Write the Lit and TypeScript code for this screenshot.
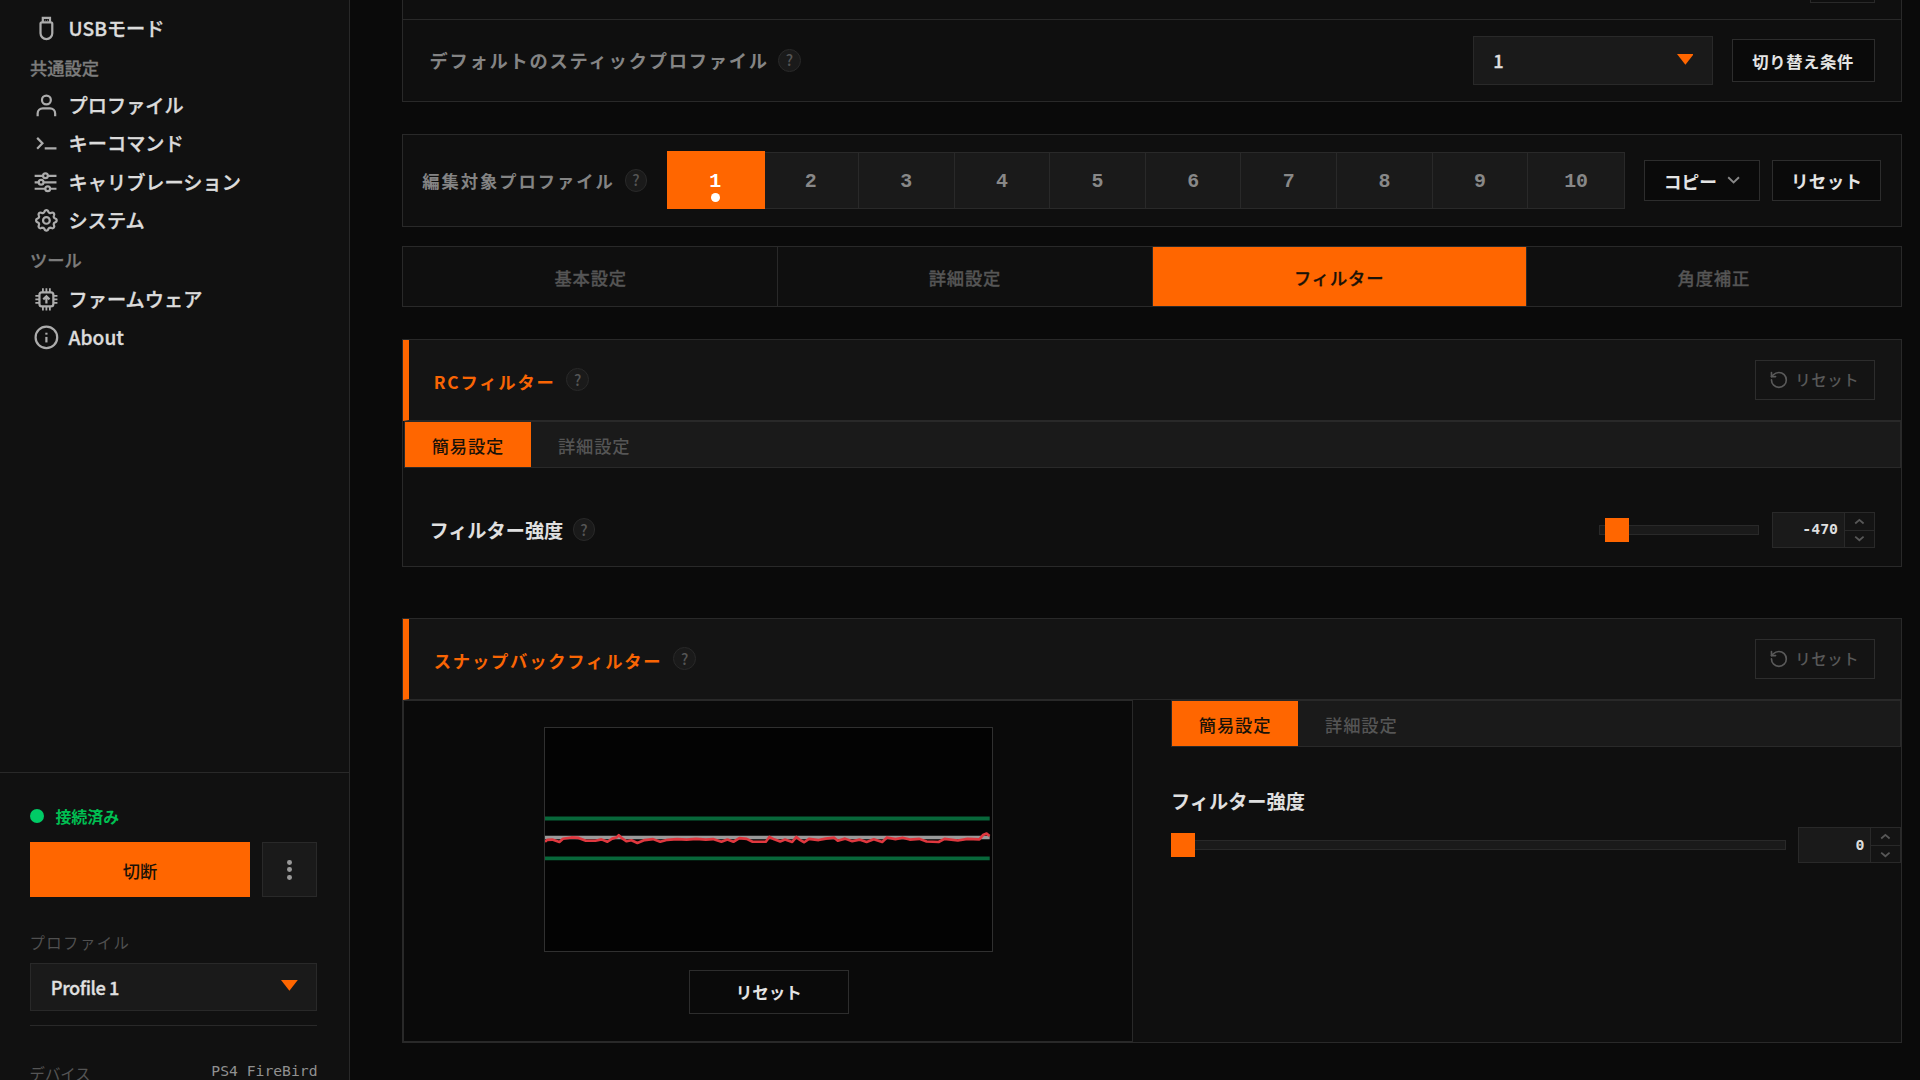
import { LitElement, html, svg, css } from "lit";
import { customElement, property } from "lit/decorators.js";
import { classMap } from "lit/directives/class-map.js";

const shared = css`
  * {
    box-sizing: border-box;
  }
  .btn {
    display: flex;
    align-items: center;
    justify-content: center;
    border: 1px solid #2d2d2d;
    background: #0a0a0a;
    color: #e4e4e4;
    font-weight: 700;
    white-space: nowrap;
  }
`;

// Eight-lobed outline of the settings cog.
const cogPath = (() => {
  const pts: string[] = [];
  for (let i = 0; i < 96; i++) {
    const a = (i / 96) * Math.PI * 2;
    const c = Math.cos(a * 8);
    const r = 7.65 + 0.9 * Math.sign(c) * Math.pow(Math.abs(c), 0.6);
    pts.push(`${(12 + r * Math.sin(a)).toFixed(2)} ${(12 - r * Math.cos(a)).toFixed(2)}`);
  }
  return `M${pts.join("L")}Z`;
})();

const icons: Record<string, unknown> = {
  usb: svg`<path d="M9 7V3.2h6V7"/><path d="M7.1 8.2Q7.1 7 8.3 7h7.4q1.2 0 1.2 1.2V16a4.9 4.9 0 0 1-9.8 0z"/><path d="M10.7 5.2h.6M12.7 5.2h.6" stroke-width="1"/>`,
  user: svg`<circle cx="12" cy="7.5" r="3.7"/><path d="M4.7 21v-2.2a4.3 4.3 0 0 1 4.3-4.3h6a4.3 4.3 0 0 1 4.3 4.3V21"/>`,
  terminal: svg`<path d="M4.3 7.4L8.7 11.9 4.3 16.4M10.6 16.2h9.8"/>`,
  sliders: svg`<path d="M2.2 6.5h6.9M13.3 6.5h7.1M2.2 11.9h3.2M9.7 11.9h10.7M2.2 17.3h8.8M15.2 17.3h5.2"/><circle cx="11.2" cy="6.5" r="2"/><circle cx="7.6" cy="11.9" r="2"/><circle cx="13.1" cy="17.3" r="2"/>`,
  cog: svg`<path d=${cogPath}/><circle cx="12" cy="12" r="2.8"/>`,
  chip: svg`<rect x="6.2" y="6.2" width="11.6" height="11.6" rx="2"/><path d="M9.1 6V2.8M12 6V2.8M14.9 6V2.8M9.1 21.2V18M12 21.2V18M14.9 21.2V18M6 9.1H2.8M6 12H2.8M6 14.9H2.8M21.2 9.1H18M21.2 12H18M21.2 14.9H18" stroke-width="1.5"/><path d="M12 15.4V9.6M9.4 12L12 9.4l2.6 2.6"/>`,
  info: svg`<circle cx="12" cy="12" r="9"/><path d="M12 11.6v4.6" /><path d="M12 8.1v1.6"/>`,
};

@customElement("help-dot")
class HelpDot extends LitElement {
  static styles = css`
    :host {
      display: flex;
      flex: none;
      align-items: center;
      justify-content: center;
      box-sizing: border-box;
      width: 19px;
      height: 19px;
      border: 1px solid #292929;
      border-radius: 50%;
      background: #1a1a1a;
      color: #555;
      font-size: 12.5px;
      font-weight: 500;
      line-height: 17px;
    }
  `;
  render() {
    return html`?`;
  }
}

@customElement("reset-button")
class ResetButton extends LitElement {
  static styles = [
    shared,
    css`
      .btn {
        width: 100px;
        height: 33.3px;
        gap: 5.5px;
        background: transparent;
        color: #585858;
        font-size: 12.8px;
        font-weight: 500;
        letter-spacing: 0.5px;
        padding-right: 1px;
      }
      .icon {
        width: 16.5px;
        height: 16.5px;
        fill: none;
        stroke: #5a5a5a;
        stroke-width: 2;
        stroke-linecap: round;
        stroke-linejoin: round;
      }
    `,
  ];
  render() {
    return html`<div class="btn">
      <svg class="icon" viewBox="0 0 24 24">
        <path d="M3 12a9 9 0 1 0 9-9 9.75 9.75 0 0 0-6.74 2.74L3 8" />
        <path d="M3 3v5h5" />
      </svg>
      <span>リセット</span>
    </div>`;
  }
}

@customElement("mode-tabs")
class ModeTabs extends LitElement {
  static styles = css`
    .strip {
      display: flex;
      box-sizing: border-box;
      height: 39.6px;
      background: #1a1a1a;
      border: 1px solid #292929;
    }
    .tab {
      width: 105.2px;
      display: flex;
      align-items: center;
      justify-content: center;
      color: #555;
      font-size: 14.4px;
      font-weight: 500;
      letter-spacing: 0.72px;
      padding-top: 2px;
      box-sizing: border-box;
    }
    .on {
      background: #ff6600;
      color: #1a1208;
    }
  `;
  render() {
    return html`<div class="strip">
      <div class="tab on">簡易設定</div>
      <div class="tab">詳細設定</div>
    </div>`;
  }
}

@customElement("range-input")
class RangeInput extends LitElement {
  @property({ type: Number }) value = 0;
  @property({ type: Number }) position = 0;
  static styles = css`
    :host {
      display: flex;
      align-items: center;
      gap: 10.5px;
    }
    .track {
      flex: 1;
      height: 8.3px;
      box-sizing: border-box;
      border: 1px solid #292929;
      background: #1a1a1a;
      display: flex;
      align-items: center;
    }
    .thumb {
      flex: none;
      width: 19.8px;
      height: 19.8px;
      background: #ff6600;
    }
    .number {
      display: grid;
      grid-template-columns: 1fr 24px;
      box-sizing: border-box;
      width: 85.6px;
      height: 30px;
      border: 1px solid #292929;
      background: #1a1a1a;
    }
    .value {
      display: flex;
      align-items: center;
      justify-content: flex-end;
      padding-right: 4.8px;
      border-right: 1px solid #292929;
      color: #dedede;
      font-family: "DejaVu Sans Mono", monospace;
      font-size: 12.4px;
      font-weight: 700;
    }
    .spin {
      display: grid;
      grid-template-rows: 1fr 1fr;
      background: #141414;
    }
    .step {
      display: flex;
      align-items: center;
      justify-content: center;
    }
    .step + .step {
      border-top: 1px solid #292929;
    }
    .icon {
      width: 9px;
      height: 6px;
      fill: none;
      stroke: #585858;
      stroke-width: 1.5;
    }
  `;
  render() {
    return html`
      <div class="track">
        <div class="thumb" style="margin-left:${this.position}px"></div>
      </div>
      <div class="number">
        <div class="value">${this.value}</div>
        <div class="spin">
          <div class="step"><svg class="icon" viewBox="0 0 9 6"><path d="M1 4.6L4.5 1.6 8 4.6" /></svg></div>
          <div class="step"><svg class="icon" viewBox="0 0 9 6"><path d="M1 1.4L4.5 4.4 8 1.4" /></svg></div>
        </div>
      </div>
    `;
  }
}

@customElement("side-bar")
class SideBar extends LitElement {
  static styles = [
    shared,
    css`
      :host {
        display: flex;
        flex: none;
        flex-direction: column;
        box-sizing: border-box;
        width: 292px;
        height: 900px;
        background: #111;
        border-right: 1px solid #292929;
      }
      .nav {
        flex: none;
        height: 643.5px;
        padding: 8px 0 0 26.3px;
        overflow: hidden;
      }
      .item {
        display: flex;
        align-items: center;
        gap: 6.9px;
        height: 32px;
        color: #dcdcdc;
        font-size: 16px;
        font-weight: 500;
        -webkit-text-stroke: 0.3px #dcdcdc;
      }
      .item .icon {
        width: 24px;
        height: 24px;
        fill: none;
        stroke: #acacac;
        stroke-width: 1.85;
      }
      .section {
        height: 31.9px;
        margin-left: -1.3px;
        color: #7c7c7c;
        font-size: 14.4px;
        font-weight: 500;
        line-height: 33px;
        -webkit-text-stroke: 0.25px #7c7c7c;
      }
      .tools {
        height: 33.6px;
      }
      .foot {
        flex: 1;
        border-top: 1px solid #292929;
        padding: 25px 26.6px 0 24.6px;
      }
      .status {
        display: flex;
        align-items: center;
        gap: 9.6px;
        height: 21px;
        color: #00bf52;
        font-size: 13.3px;
        font-weight: 700;
      }
      .led {
        width: 12px;
        height: 12px;
        border-radius: 50%;
        background: #00cc66;
      }
      .actions {
        display: flex;
        gap: 10px;
        margin-top: 11.6px;
        height: 46px;
      }
      .disconnect {
        flex: 1;
        display: flex;
        align-items: center;
        justify-content: center;
        background: #ff6600;
        color: #1a1208;
        font-size: 14.4px;
        font-weight: 500;
        padding-top: 2px;
      }
      .kebab {
        width: 46px;
        display: flex;
        flex-direction: column;
        align-items: center;
        justify-content: center;
        gap: 2.2px;
        background: #1a1a1a;
        border: 1px solid #292929;
      }
      .dot {
        width: 4px;
        height: 4px;
        border-radius: 50%;
        background: #999;
      }
      .label {
        margin-top: 28px;
        height: 20px;
        line-height: 19px;
        color: #505050;
        font-size: 12.8px;
        letter-spacing: 1.2px;
      }
      .select {
        margin-top: 6.3px;
        display: flex;
        align-items: center;
        justify-content: space-between;
        height: 40.3px;
        padding: 2px 15.5px 0 16.9px;
        background: #1a1a1a;
        border: 1px solid #292929;
        color: #e0e0e0;
        font-size: 15.2px;
        font-weight: 500;
        letter-spacing: -0.35px;
        -webkit-text-stroke: 0.25px #e0e0e0;
      }
      .arrow {
        width: 14px;
        height: 9px;
        fill: #ff6600;
        margin-top: -4.5px;
      }
      .device {
        display: flex;
        justify-content: space-between;
        margin-top: 11.3px;
        padding-top: 29px;
        border-top: 1px solid #292929;
        color: #555;
        font-size: 12.8px;
        line-height: 22px;
      }
      .model {
        color: #909090;
        font-family: "DejaVu Sans Mono", monospace;
        font-size: 12.25px;
        line-height: 19px;
      }
    `,
  ];
  private item(icon: string, text: string) {
    return html`<div class="item">
      <svg class="icon" viewBox="0 0 24 24">${icons[icon]}</svg>
      <span>${text}</span>
    </div>`;
  }
  render() {
    return html`
      <nav class="nav">
        ${this.item("usb", "USBモード")}
        <div class="section">共通設定</div>
        ${this.item("user", "プロファイル")} ${this.item("terminal", "キーコマンド")}
        ${this.item("sliders", "キャリブレーション")} ${this.item("cog", "システム")}
        <div class="section tools">ツール</div>
        ${this.item("chip", "ファームウェア")} ${this.item("info", "About")}
      </nav>
      <div class="foot">
        <div class="status"><span class="led"></span><span>接続済み</span></div>
        <div class="actions">
          <div class="disconnect">切断</div>
          <div class="kebab"><i class="dot"></i><i class="dot"></i><i class="dot"></i></div>
        </div>
        <div class="label">プロファイル</div>
        <div class="select">
          <span>Profile 1</span>
          <svg class="arrow" viewBox="0 0 14 9"><path d="M0 0h14L7 9z" /></svg>
        </div>
        <div class="device"><span>デバイス</span><span class="model">PS4 FireBird</span></div>
      </div>
    `;
  }
}

const trace =
  "0,94.8 2,93.2 6,93 12,95 15,92.3 22,91.2 28,91.6 34,94 42,94 47,92.8 52,94.8 56,92.2 60,91 61.5,89.4 64,91.8 68,94.4 72,93.6 77,95.8 83,93.4 90,92.6 96,94.8 102,93.2 110,92.6 118,93 126,92.4 134,93 140,92.6 147,94.8 152,93 157,94.8 162,91.8 168,92.4 173,94.8 184,94.8 187,90.8 191,92.8 196,94.6 200,93 206,95 209.5,90.8 212,93 216,95.2 220,92.4 228,93.4 234,92.2 241,91.4 244,94 250,92.2 256,94.4 262,93 268,95 274,92.8 281,95 285,91.2 292,92.6 298,91.4 304,93 312,92.4 318,94.6 328,95 333,92.4 344,93.8 352,92.4 362,92.8 365,89.2 368,88 370.5,90";

@customElement("app-root")
class AppRoot extends LitElement {
  static styles = [
    shared,
    css`
      :host {
        display: flex;
        zoom: 1.2;
        width: 1600px;
        height: 900px;
        overflow: hidden;
        background: #0a0a0a;
        font-family: "Noto Sans CJK JP", sans-serif;
        line-height: 1.4;
      }
      .main {
        flex: 1;
        display: flex;
        flex-direction: column;
        padding: 0 15px 0 43px;
      }
      .panel {
        flex: none;
        background: #0f0f0f;
        border: 1px solid #292929;
      }
      .stick {
        display: flex;
        flex-direction: column;
        height: 84.8px;
        border-top: 0;
      }
      .above {
        height: 16px;
        display: flex;
        justify-content: flex-end;
        padding-right: 22px;
      }
      .cut {
        width: 54.2px;
        height: 2.4px;
        border: 1px solid #292929;
        border-top: 0;
      }
      .stickrow {
        flex: 1;
        display: flex;
        align-items: center;
        border-top: 1px solid #292929;
        padding: 0 22px 0 22px;
      }
      .caption {
        color: #848484;
        font-weight: 700;
      }
      .wide {
        font-size: 15.2px;
        letter-spacing: 1.5px;
        margin-right: 7.6px;
      }
      .select {
        margin-left: auto;
        display: flex;
        align-items: center;
        justify-content: space-between;
        width: 200.4px;
        height: 40.3px;
        padding: 1px 15.5px 0 16.4px;
        background: #1a1a1a;
        border: 1px solid #292929;
        color: #e0e0e0;
        font-size: 15.2px;
        font-weight: 500;
        -webkit-text-stroke: 0.25px #e0e0e0;
      }
      .arrow {
        width: 14px;
        height: 9px;
        fill: #ff6600;
        margin-top: -2px;
      }
      .switch {
        width: 119.2px;
        height: 36.2px;
        margin-left: 15.5px;
        padding-top: 1px;
        font-size: 13.6px;
        letter-spacing: 0.5px;
      }
      .edit {
        display: flex;
        align-items: center;
        height: 77.2px;
        margin-top: 27px;
        padding: 0 16px 0 16px;
      }
      .narrow {
        font-size: 14.4px;
        letter-spacing: 1.65px;
        margin-right: 8.3px;
        padding-top: 1px;
      }
      .slots {
        display: grid;
        grid-template-columns: repeat(10, 1fr);
        width: 798.4px;
        height: 48px;
        margin-left: 16.2px;
        background: #1a1a1a;
        border: 1px solid #292929;
      }
      .slot {
        position: relative;
        display: flex;
        align-items: center;
        justify-content: center;
        border-right: 1px solid #292929;
        color: #888;
        font-family: "Liberation Mono", monospace;
        font-size: 16.6px;
        font-weight: 700;
        padding-top: 3px;
      }
      .slot:last-child {
        border-right: 0;
      }
      .current {
        margin: -1px -1px -1px -1px;
        background: #ff6600;
        border-color: #ff6600;
        color: #fff;
      }
      .mark {
        position: absolute;
        left: 50%;
        bottom: 6.5px;
        width: 7.4px;
        height: 7.4px;
        margin-left: -3.7px;
        border-radius: 50%;
        background: #fff;
      }
      .copy {
        width: 96.6px;
        height: 34.6px;
        gap: 8.5px;
        margin-left: 16px;
        padding-top: 1px;
        font-size: 14.8px;
      }
      .chev {
        width: 11px;
        height: 7px;
        margin-top: -2px;
        fill: none;
        stroke: #888;
        stroke-width: 1.6;
      }
      .reset {
        width: 91.2px;
        height: 34.6px;
        margin-left: 10px;
        padding-top: 1px;
        font-size: 14.6px;
        letter-spacing: 0.3px;
      }
      .tabs {
        display: grid;
        grid-template-columns: repeat(4, 1fr);
        height: 50.8px;
        margin-top: 16px;
        padding-left: 0.9px;
      }
      .tab {
        display: flex;
        align-items: center;
        justify-content: center;
        padding-top: 2px;
        border-right: 1px solid #292929;
        color: #555;
        font-size: 14.4px;
        font-weight: 500;
        letter-spacing: 0.72px;
        -webkit-text-stroke: 0.25px;
      }
      .tab:last-child {
        border-right: 0;
      }
      .active {
        background: #ff6600;
        color: #1a1208;
      }
      .head {
        display: flex;
        align-items: center;
        height: 67.2px;
        padding: 0 22px 0 20.6px;
        background: #141414;
        border-left: 5px solid #ff6600;
        border-bottom: 1px solid #292929;
      }
      .title {
        color: #f96504;
        font-size: 14.4px;
        font-weight: 700;
        letter-spacing: 1.52px;
        margin-right: 9px;
        padding-top: 3px;
      }
      .push {
        margin-left: auto;
      }
      .rc {
        height: 190px;
        margin-top: 26.8px;
      }
      .inset {
        padding-left: 0.7px;
      }
      .rcrow {
        display: flex;
        align-items: center;
        height: 102.6px;
        padding: 0 22px;
      }
      .name {
        color: #e0e0e0;
        font-size: 16px;
        font-weight: 700;
        margin-right: 7.7px;
        padding-top: 1px;
      }
      .short {
        width: 229.6px;
        margin-left: auto;
      }
      .snap {
        display: flex;
        flex-direction: column;
        height: 353.9px;
        margin-top: 42.5px;
      }
      .body {
        flex: 1;
        display: grid;
        grid-template-columns: 608px 1fr;
        column-gap: 32px;
      }
      .scope {
        display: flex;
        flex-direction: column;
        align-items: center;
        background: #0a0a0a;
        border: 1px solid #292929;
        padding: 21.9px 0 0 1.6px;
      }
      .plot {
        width: 374px;
        height: 187.2px;
        border: 1px solid #303030;
        background: #030303;
      }
      .wave {
        display: block;
        width: 372.4px;
        height: 185.4px;
      }
      .clear {
        width: 133.4px;
        height: 36.6px;
        margin-top: 15.6px;
        font-size: 13.8px;
        background: transparent;
      }
      .tune {
        display: flex;
        flex-direction: column;
      }
      .tune .name {
        margin: 33.2px 0 0;
        line-height: 22px;
      }
      .long {
        margin-top: 10.4px;
      }
    `,
  ];
  render() {
    return html`
      <side-bar></side-bar>
      <main class="main">
        <section class="panel stick">
          <div class="above"><div class="cut"></div></div>
          <div class="stickrow">
            <span class="caption wide">デフォルトのスティックプロファイル</span>
            <help-dot></help-dot>
            <div class="select">
              <span>1</span>
              <svg class="arrow" viewBox="0 0 14 9"><path d="M0 0h14L7 9z" /></svg>
            </div>
            <div class="btn switch">切り替え条件</div>
          </div>
        </section>
        <section class="panel edit">
          <span class="caption narrow">編集対象プロファイル</span>
          <help-dot></help-dot>
          <div class="slots">
            ${Array.from({ length: 10 }, (_, i) => html`<div class=${classMap({ slot: true, current: i === 0 })}>
                ${i + 1}${i === 0 ? html`<i class="mark"></i>` : ""}
              </div>`)}
          </div>
          <div class="btn copy">
            コピー<svg class="chev" viewBox="0 0 11 7"><path d="M1 1l4.5 4.3L10 1" /></svg>
          </div>
          <div class="btn reset">リセット</div>
        </section>
        <nav class="panel tabs">
          ${["基本設定", "詳細設定", "フィルター", "角度補正"].map(
            (t, i) => html`<div class=${classMap({ tab: true, active: i === 2 })}>${t}</div>`
          )}
        </nav>
        <section class="panel rc">
          <div class="head">
            <span class="title">RCフィルター</span><help-dot></help-dot>
            <reset-button class="push"></reset-button>
          </div>
          <div class="inset"><mode-tabs></mode-tabs></div>
          <div class="rcrow">
            <span class="name">フィルター強度</span><help-dot></help-dot>
            <range-input class="short" .value=${-470} .position=${4.2}></range-input>
          </div>
        </section>
        <section class="panel snap">
          <div class="head">
            <span class="title">スナップバックフィルター</span><help-dot></help-dot>
            <reset-button class="push"></reset-button>
          </div>
          <div class="body">
            <div class="scope">
              <div class="plot">
                <svg class="wave" viewBox="0 0 372.4 185.4">
                  <path d="M0 75.4h370.6M0 108.6h370.6" stroke="#08673a" stroke-width="3.2" />
                  <path d="M0 91.3h370.6" stroke="#9a9a9a" stroke-width="3" />
                  <polyline points=${trace} fill="none" stroke="#e0383f" stroke-width="2.2" stroke-linejoin="round" />
                </svg>
              </div>
              <div class="btn clear">リセット</div>
            </div>
            <div class="tune">
              <mode-tabs></mode-tabs>
              <span class="name">フィルター強度</span>
              <range-input class="long" .value=${0} .position=${-0.5}></range-input>
            </div>
          </div>
        </section>
      </main>
    `;
  }
}
